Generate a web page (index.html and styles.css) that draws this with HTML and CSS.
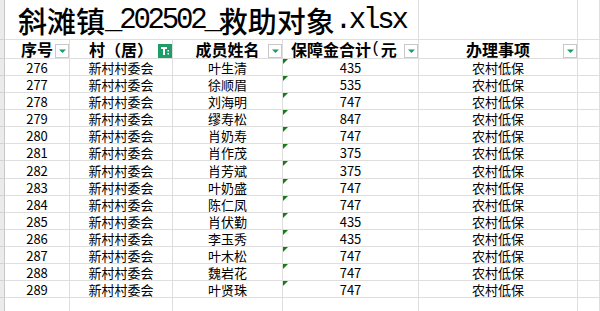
FILE: index.html
```html
<!DOCTYPE html>
<html lang="zh-CN">
<head>
<meta charset="utf-8">
<title>斜滩镇_202502_救助对象.xlsx</title>
<link rel="stylesheet" href="styles.css">
</head>
<body>
<div class="sheet">
  <div class="row title-row">
    <div class="rh"></div>
    <div class="cell title">斜滩镇<span class="lat">_202502_</span>救助对象<span class="lat">.xlsx</span></div>
    <div class="cell"></div>
    <div class="cell"></div>
  </div>
  <div class="row head">
    <div class="rh"></div>
    <div class="cell h">序号<span class="fbtn"><svg width="12" height="12" viewBox="0 0 12 12"><polygon points="3,4.5 10,4.5 6.5,8" fill="#1e9b64"/></svg></span></div>
    <div class="cell h">村（居）<span class="fact"><svg width="14" height="14" viewBox="0 0 14 14"><rect x="3" y="3" width="6" height="2" fill="#fff"/><rect x="5" y="5" width="2" height="6" fill="#fff"/><rect x="9.5" y="6" width="1.5" height="1.5" fill="#fff"/><rect x="9.5" y="9" width="1.5" height="1.5" fill="#fff"/></svg></span></div>
    <div class="cell h">成员姓名<span class="fbtn"><svg width="12" height="12" viewBox="0 0 12 12"><polygon points="3,4.5 10,4.5 6.5,8" fill="#1e9b64"/></svg></span></div>
    <div class="cell h amt">保障金合计<span class="paren">(</span>元<span class="fbtn"><svg width="12" height="12" viewBox="0 0 12 12"><polygon points="3,4.5 10,4.5 6.5,8" fill="#1e9b64"/></svg></span></div>
    <div class="cell h">办理事项<span class="fbtn"><svg width="12" height="12" viewBox="0 0 12 12"><polygon points="3,4.5 10,4.5 6.5,8" fill="#1e9b64"/></svg></span></div>
    <div class="cell"></div>
  </div>
  <div class="row data"><div class="rh"></div><div class="cell">276</div><div class="cell">新村村委会</div><div class="cell">叶生清</div><div class="cell"><span class="mark"></span>435</div><div class="cell">农村低保</div><div class="cell"></div></div>
  <div class="row data"><div class="rh"></div><div class="cell">277</div><div class="cell">新村村委会</div><div class="cell">徐顺眉</div><div class="cell"><span class="mark"></span>535</div><div class="cell">农村低保</div><div class="cell"></div></div>
  <div class="row data"><div class="rh"></div><div class="cell">278</div><div class="cell">新村村委会</div><div class="cell">刘海明</div><div class="cell"><span class="mark"></span>747</div><div class="cell">农村低保</div><div class="cell"></div></div>
  <div class="row data"><div class="rh"></div><div class="cell">279</div><div class="cell">新村村委会</div><div class="cell">缪寿松</div><div class="cell"><span class="mark"></span>847</div><div class="cell">农村低保</div><div class="cell"></div></div>
  <div class="row data"><div class="rh"></div><div class="cell">280</div><div class="cell">新村村委会</div><div class="cell">肖奶寿</div><div class="cell"><span class="mark"></span>747</div><div class="cell">农村低保</div><div class="cell"></div></div>
  <div class="row data"><div class="rh"></div><div class="cell">281</div><div class="cell">新村村委会</div><div class="cell">肖作茂</div><div class="cell"><span class="mark"></span>375</div><div class="cell">农村低保</div><div class="cell"></div></div>
  <div class="row data"><div class="rh"></div><div class="cell">282</div><div class="cell">新村村委会</div><div class="cell">肖芳斌</div><div class="cell"><span class="mark"></span>375</div><div class="cell">农村低保</div><div class="cell"></div></div>
  <div class="row data"><div class="rh"></div><div class="cell">283</div><div class="cell">新村村委会</div><div class="cell">叶奶盛</div><div class="cell"><span class="mark"></span>747</div><div class="cell">农村低保</div><div class="cell"></div></div>
  <div class="row data"><div class="rh"></div><div class="cell">284</div><div class="cell">新村村委会</div><div class="cell">陈仁凤</div><div class="cell"><span class="mark"></span>747</div><div class="cell">农村低保</div><div class="cell"></div></div>
  <div class="row data"><div class="rh"></div><div class="cell">285</div><div class="cell">新村村委会</div><div class="cell">肖伏勤</div><div class="cell"><span class="mark"></span>435</div><div class="cell">农村低保</div><div class="cell"></div></div>
  <div class="row data"><div class="rh"></div><div class="cell">286</div><div class="cell">新村村委会</div><div class="cell">李玉秀</div><div class="cell"><span class="mark"></span>435</div><div class="cell">农村低保</div><div class="cell"></div></div>
  <div class="row data"><div class="rh"></div><div class="cell">287</div><div class="cell">新村村委会</div><div class="cell">叶木松</div><div class="cell"><span class="mark"></span>747</div><div class="cell">农村低保</div><div class="cell"></div></div>
  <div class="row data"><div class="rh"></div><div class="cell">288</div><div class="cell">新村村委会</div><div class="cell">魏岩花</div><div class="cell"><span class="mark"></span>747</div><div class="cell">农村低保</div><div class="cell"></div></div>
  <div class="row data"><div class="rh"></div><div class="cell">289</div><div class="cell">新村村委会</div><div class="cell">叶贤珠</div><div class="cell"><span class="mark"></span>747</div><div class="cell">农村低保</div><div class="cell"></div></div>
  <div class="row data"><div class="rh"></div><div class="cell"></div><div class="cell"></div><div class="cell"></div><div class="cell"></div><div class="cell"></div><div class="cell"></div></div>
</div>
</body>
</html>
```
FILE: styles.css
```css
html, body {
  margin: 0;
  padding: 0;
  background: #ffffff;
}
body {
  width: 600px;
  height: 311px;
  overflow: hidden;
  font-family: "Noto Sans CJK SC", sans-serif;
  color: #000000;
}
.sheet {
  display: flex;
  flex-direction: column;
}
.row {
  display: grid;
  grid-template-columns: 5px 65px 103px 110px 136px 159px 1fr;
}
.row > div {
  box-sizing: border-box;
  border-right: 1px solid #dedede;
  border-bottom: 1px solid #dedede;
  position: relative;
}
.row > .rh {
  background: #ebebeb;
  border-right-color: #c8c8c8;
  border-bottom-color: #d4d4d4;
}
.title-row {
  height: 40px;
}
.title-row .title {
  grid-column: span 4;
  display: flex;
  align-items: flex-end;
  padding: 0 0 4px 13px;
  font-size: 29px;
  line-height: 29px;
  font-weight: 500;
  white-space: nowrap;
}
.lat {
  font-family: "Liberation Mono", monospace;
  font-weight: normal;
  font-size: 29px;
  letter-spacing: -3.2px;
}
.head {
  height: 19px;
}
.h {
  display: flex;
  align-items: flex-end;
  justify-content: center;
  font-size: 16px;
  line-height: 16px;
  font-weight: bold;
  padding-bottom: 1px;
  white-space: nowrap;
}
.h.amt {
  justify-content: flex-start;
  padding-left: 8px;
}
.paren {
  font-family: "Liberation Mono", monospace;
  font-weight: normal;
}
.fbtn, .fact {
  position: absolute;
  right: 0;
  bottom: 0;
  width: 14px;
  height: 14px;
  box-sizing: border-box;
}
.fbtn {
  border: 1px solid #c9c9c9;
  background: #ffffff;
}
.fbtn svg, .fact svg {
  display: block;
}
.fact {
  background: #1f9d69;
}
.data {
  height: 17.08px;
}
.data > .cell {
  display: flex;
  align-items: flex-end;
  justify-content: center;
  font-size: 13px;
  line-height: 14px;
  white-space: nowrap;
}
.mark {
  position: absolute;
  top: 0;
  left: 0;
  width: 0;
  height: 0;
  border-top: 5px solid #127f12;
  border-right: 5px solid transparent;
}
```
